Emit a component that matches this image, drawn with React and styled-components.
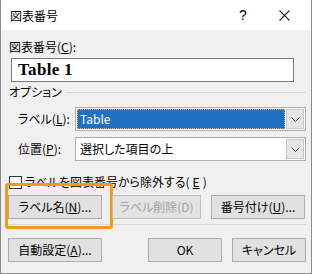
import React from "react";
import styled, {createGlobalStyle} from "styled-components";

const GlobalStyle = createGlobalStyle`
    html, body {
        margin: 0;
        padding: 0;
        background: #ffffff;
    }
    body {
        font-family: "Noto Sans CJK JP", "Noto Sans", sans-serif;
        font-size: 12px;
        font-feature-settings: "palt";
        color: #000;
    }
`;

const Window = styled.div`
    width: 312px;
    height: 274px;
    box-sizing: border-box;
    border: 1px solid #8a8a8a;
    border-top: none;
    background: #f0f0f0;
    display: flex;
    flex-direction: column;
    overflow: hidden;
`;

const TitleBar = styled.div`
    height: 30px;
    flex-shrink: 0;
    background: #ffffff;
    display: flex;
    align-items: center;
    padding: 0 5px 0 9px;
    font-size: 12px;
`;

const TitleText = styled.div`
    flex: 1;
`;

const TitleButton = styled.div`
    width: ${props => props.width}px;
    height: 30px;
    display: flex;
    align-items: center;
    justify-content: center;
    font-family: "Liberation Sans", sans-serif;
    font-size: 14px;
`;

const Body = styled.div`
    flex: 1;
    display: flex;
    flex-direction: column;
    padding: 9px 5px 0 7px;
    line-height: 16px;
    white-space: nowrap;
`;

const FieldLabel = styled.div`
    height: 16px;
    padding-left: 1px;
`;

const TextInput = styled.div`
    margin: 3px 0 0 3px;
    width: 283px;
    height: 24px;
    box-sizing: border-box;
    border: 1px solid #7a7a7a;
    background: #ffffff;
    padding-left: 6px;
    font-family: "Liberation Serif", serif;
    font-weight: 700;
    font-size: 17px;
    line-height: 22px;
    letter-spacing: 0.3px;
`;

const GroupHeader = styled.div`
    margin-top: 2px;
    height: 16px;
    display: flex;
    align-items: center;
    gap: 4px;
    padding-left: 1px;

    &::after {
        content: "";
        flex: 1;
        height: 1px;
        background: #d5d5d5;
    }
`;

const OptionRow = styled.div`
    margin-top: ${props => props.gap}px;
    display: flex;
    align-items: center;
`;

const OptionLabel = styled.div`
    width: 67px;
    flex-shrink: 0;
    padding-left: 10px;
    box-sizing: border-box;
`;

const ComboBox = styled.div`
    width: 231px;
    height: 24px;
    flex-shrink: 0;
    box-sizing: border-box;
    border: 1px solid #acacac;
    background: #ffffff;
    display: flex;
    align-items: stretch;
    padding: 1px;
`;

const ComboValue = styled.div`
    flex: 1;
    display: flex;
    align-items: center;
    padding-left: 3px;
    background: ${props => props.selected ? "#1f70c1" : "transparent"};
    color: ${props => props.selected ? "#ffffff" : "#000000"};
    outline: ${props => props.selected ? "1px dotted #f0a040" : "none"};
    outline-offset: -1px;
`;

const ComboArrow = styled.div`
    width: 16px;
    margin-left: 1px;
    background: #e6e6e6;
    border: 1px solid #c8c8c8;
    display: flex;
    align-items: center;
    justify-content: center;
`;

const CheckRow = styled.div`
    margin-top: 13px;
    height: 16px;
    display: flex;
    align-items: center;
    gap: 3px;
    padding-left: 1px;
`;

const CheckBox = styled.div`
    width: 13px;
    height: 13px;
    flex-shrink: 0;
    box-sizing: border-box;
    border: 1px solid #333333;
    background: #ffffff;
`;

const ButtonRow = styled.div`
    margin-top: ${props => props.gap}px;
    display: flex;
    gap: 10px;
`;

const Spacer = styled.div`
    flex: 1;
`;

const Button = styled.div`
    position: relative;
    width: ${props => props.width}px;
    height: 24px;
    flex-shrink: 0;
    box-sizing: border-box;
    border: 1px solid ${props => props.disabled ? "#bfbfbf" : "#adadad"};
    background: ${props => props.disabled ? "#e3e3e3" : "#e1e1e1"};
    color: ${props => props.disabled ? "#a0a0a0" : "#000000"};
    display: flex;
    align-items: center;
    justify-content: center;
`;

const Highlight = styled.span`
    position: absolute;
    left: -4px;
    top: -13px;
    width: 108px;
    height: 46px;
    box-sizing: border-box;
    border: 3px solid #f39a1d;
    border-radius: 3px;
    pointer-events: none;
`;

const Separator = styled.div`
    margin-top: 5px;
    height: 1px;
    background: #d5d5d5;
`;

const Chevron = () => (
    <svg width="9" height="5" viewBox="0 0 9 5">
        <path d="M0.5 0.5 L4.5 4.5 L8.5 0.5" fill="none" stroke="#444" strokeWidth="1"/>
    </svg>
);

const CloseIcon = () => (
    <svg width="11" height="11" viewBox="0 0 11 11">
        <path d="M0.5 0.5 L10.5 10.5 M10.5 0.5 L0.5 10.5" stroke="#222" strokeWidth="1.1"/>
    </svg>
);

const App = () => {
    return (
        <Window>
            <GlobalStyle/>
            <TitleBar>
                <TitleText>図表番号</TitleText>
                <TitleButton width={38}>?</TitleButton>
                <TitleButton width={44}>
                    <CloseIcon/>
                </TitleButton>
            </TitleBar>
            <Body>
                <FieldLabel>図表番号(<u>C</u>):</FieldLabel>
                <TextInput>Table 1</TextInput>
                <GroupHeader>オプション</GroupHeader>

                <OptionRow gap={7}>
                    <OptionLabel>ラベル(<u>L</u>):</OptionLabel>
                    <ComboBox>
                        <ComboValue selected>Table</ComboValue>
                        <ComboArrow><Chevron/></ComboArrow>
                    </ComboBox>
                </OptionRow>
                <OptionRow gap={6}>
                    <OptionLabel>位置(<u>P</u>):</OptionLabel>
                    <ComboBox>
                        <ComboValue>選択した項目の上</ComboValue>
                        <ComboArrow><Chevron/></ComboArrow>
                    </ComboBox>
                </OptionRow>

                <CheckRow>
                    <CheckBox/>
                    ラベルを図表番号から除外する(<u>E</u>)
                </CheckRow>

                <ButtonRow gap={5}>
                    <Button width={94}>
                        ラベル名(<u>N</u>)...
                        <Highlight/>
                    </Button>
                    <Button width={89} disabled>ラベル削除(D)</Button>
                    <Button width={94}>番号付け(<u>U</u>)...</Button>
                </ButtonRow>

                <Separator/>

                <ButtonRow gap={13}>
                    <Button width={94}>自動設定(<u>A</u>)...</Button>
                    <Spacer/>
                    <Button width={74}>OK</Button>
                    <Button width={74}>キャンセル</Button>
                </ButtonRow>
            </Body>
        </Window>
    );
};

export default App;
